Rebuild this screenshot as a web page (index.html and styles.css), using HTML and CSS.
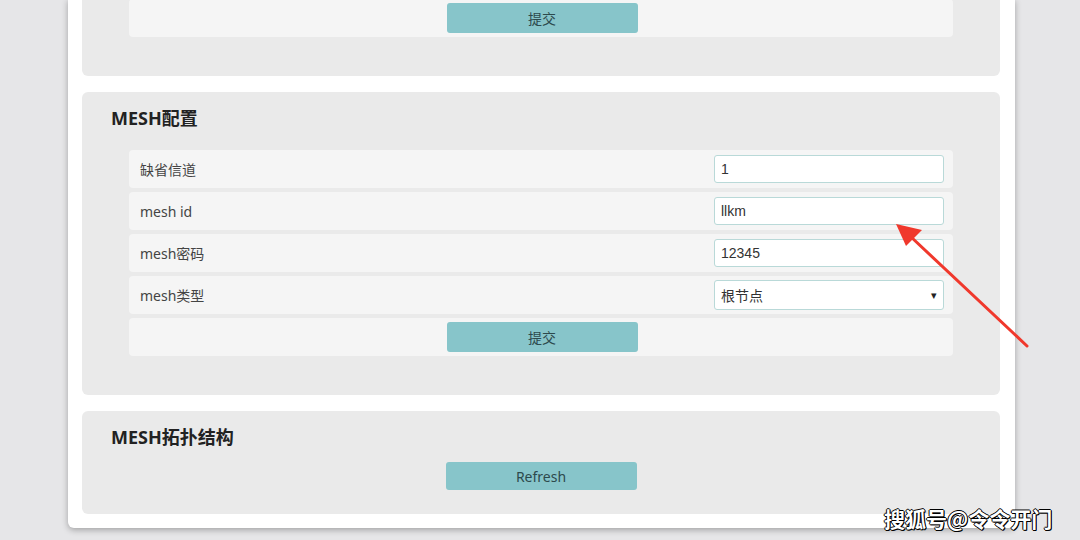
FILE: index.html
```html
<!DOCTYPE html>
<html lang="zh-CN">
<head>
    <meta charset="UTF-8">
    <meta name="viewport" content="width=device-width, initial-scale=1.0">
    <link rel="stylesheet" href="styles.css">
    <title>MESH配置</title>
</head>
<body>
    <div class="container">
        <div class="section first">
            <div class="row center">
                <button class="btn">提交</button>
            </div>
        </div>

        <div class="section">
            <h3 class="title">MESH配置</h3>
            <div class="row">
                <span class="label">缺省信道</span>
                <input class="field" type="text" value="1">
            </div>
            <div class="row">
                <span class="label">mesh id</span>
                <input class="field" type="text" value="llkm">
            </div>
            <div class="row">
                <span class="label">mesh密码</span>
                <input class="field" type="text" value="12345">
            </div>
            <div class="row">
                <span class="label">mesh类型</span>
                <div class="field select">
                    <span>根节点</span>
                    <span class="caret">&#9662;</span>
                </div>
            </div>
            <div class="row center">
                <button class="btn">提交</button>
            </div>
        </div>

        <div class="section last">
            <h3 class="title">MESH拓扑结构</h3>
            <div class="center">
                <button class="btn refresh">Refresh</button>
            </div>
        </div>
    </div>

    <svg class="arrow" width="140" height="130" viewBox="0 0 140 130">
        <line x1="131" y1="122" x2="14" y2="12" stroke="#f0382c" stroke-width="3" stroke-linecap="round"/>
        <polygon points="0,0 26,6 10,22" fill="#f0382c"/>
    </svg>

    <div class="watermark">搜狐号@令令开门</div>
</body>
</html>
```

FILE: styles.css
```css
body {
    margin: 0;
    background-color: #e6e6e8;
    font-family: "Noto Sans", "Noto Sans CJK SC", sans-serif;
    height: 540px;
    overflow: hidden;
    position: relative;
}

.container {
    width: 918px;
    margin: -1px 0 0 68px;
    padding: 0 15px 14px 14px;
    background-color: #ffffff;
    border-radius: 0 0 6px 6px;
    box-shadow: 0 2px 6px rgba(0, 0, 0, 0.3);
}

.section {
    background-color: #eaeaea;
    border-radius: 6px;
    padding: 16px 47px 39px;
    margin-bottom: 16px;
}

.section.first {
    padding-top: 0;
    border-radius: 0 0 6px 6px;
}

.section.last {
    margin-bottom: 0;
    padding-bottom: 24px;
}

.title {
    margin: 0 -18px 22px;
    font-size: 18px;
    line-height: 20px;
    font-weight: bold;
    color: #222;
}

.section.last .title {
    margin-bottom: 15px;
}

.row {
    display: flex;
    align-items: center;
    justify-content: space-between;
    height: 38px;
    margin-bottom: 4px;
    padding: 0 9px 0 11px;
    background-color: #f5f5f5;
    border-radius: 4px;
}

.row:last-child {
    margin-bottom: 0;
}

.center {
    justify-content: center;
    display: flex;
}

.label {
    font-size: 14px;
    color: #444;
}

.field {
    box-sizing: border-box;
    width: 230px;
    height: 28px;
    padding: 0 6px;
    font-family: "Liberation Sans", "Noto Sans CJK SC", sans-serif;
    font-size: 14px;
    color: #333;
    background-color: #ffffff;
    border: 1px solid #b9d9d8;
    border-radius: 3px;
    outline: none;
}

.select {
    display: flex;
    align-items: center;
    justify-content: space-between;
    height: 30px;
}

.caret {
    font-size: 11px;
    color: #222;
}

.btn {
    width: 191px;
    height: 30px;
    background-color: #87c5ca;
    border: none;
    border-radius: 3px;
    font-family: "Noto Sans", "Noto Sans CJK SC", sans-serif;
    font-size: 14px;
    color: #2d4a4d;
}

.btn.refresh {
    height: 28px;
}

.arrow {
    position: absolute;
    left: 896px;
    top: 224px;
}

.watermark {
    position: absolute;
    left: 884px;
    top: 503px;
    font-family: "Noto Sans CJK SC", sans-serif;
    font-size: 21px;
    font-weight: bold;
    color: #ffffff;
    text-shadow: -1px 0 #000, 1px 0 #000, 0 -1px #000, 0 1px #000, 1px 1px #000;
}
```
